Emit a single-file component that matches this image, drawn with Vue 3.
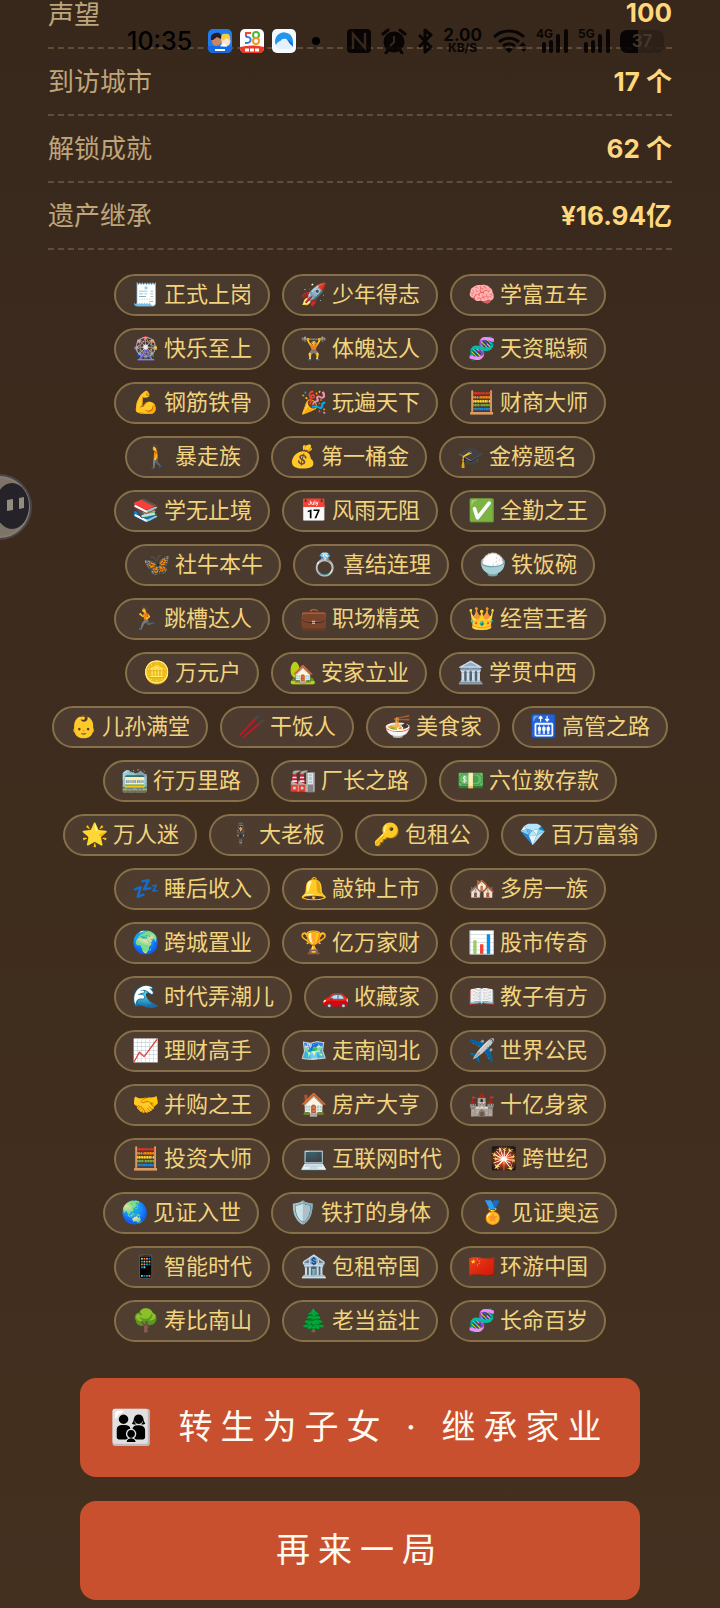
<script setup>
const stats = [
  { label: '声望', value: '100' },
  { label: '到访城市', value: '17 个' },
  { label: '解锁成就', value: '62 个' },
  { label: '遗产继承', value: '¥16.94亿' }
]

const badges = [
  { icon: '🧾', name: '正式上岗' },
  { icon: '🚀', name: '少年得志' },
  { icon: '🧠', name: '学富五车' },
  { icon: '🎡', name: '快乐至上' },
  { icon: '🏋️', name: '体魄达人' },
  { icon: '🧬', name: '天资聪颖' },
  { icon: '💪', name: '钢筋铁骨' },
  { icon: '🎉', name: '玩遍天下' },
  { icon: '🧮', name: '财商大师' },
  { icon: '🚶', name: '暴走族' },
  { icon: '💰', name: '第一桶金' },
  { icon: '🎓', name: '金榜题名' },
  { icon: '📚', name: '学无止境' },
  { icon: '📅', name: '风雨无阻' },
  { icon: '✅', name: '全勤之王' },
  { icon: '🦋', name: '社牛本牛' },
  { icon: '💍', name: '喜结连理' },
  { icon: '🍚', name: '铁饭碗' },
  { icon: '🏃', name: '跳槽达人' },
  { icon: '💼', name: '职场精英' },
  { icon: '👑', name: '经营王者' },
  { icon: '🪙', name: '万元户' },
  { icon: '🏡', name: '安家立业' },
  { icon: '🏛️', name: '学贯中西' },
  { icon: '👶', name: '儿孙满堂' },
  { icon: '🥢', name: '干饭人' },
  { icon: '🍜', name: '美食家' },
  { icon: '🛗', name: '高管之路' },
  { icon: '🚞', name: '行万里路' },
  { icon: '🏭', name: '厂长之路' },
  { icon: '💵', name: '六位数存款' },
  { icon: '🌟', name: '万人迷' },
  { icon: '🕴️', name: '大老板' },
  { icon: '🔑', name: '包租公' },
  { icon: '💎', name: '百万富翁' },
  { icon: '💤', name: '睡后收入' },
  { icon: '🔔', name: '敲钟上市' },
  { icon: '🏘️', name: '多房一族' },
  { icon: '🌍', name: '跨城置业' },
  { icon: '🏆', name: '亿万家财' },
  { icon: '📊', name: '股市传奇' },
  { icon: '🌊', name: '时代弄潮儿' },
  { icon: '🚗', name: '收藏家' },
  { icon: '📖', name: '教子有方' },
  { icon: '📈', name: '理财高手' },
  { icon: '🗺️', name: '走南闯北' },
  { icon: '✈️', name: '世界公民' },
  { icon: '🤝', name: '并购之王' },
  { icon: '🏠', name: '房产大亨' },
  { icon: '🏰', name: '十亿身家' },
  { icon: '🧮', name: '投资大师' },
  { icon: '💻', name: '互联网时代' },
  { icon: '🎇', name: '跨世纪' },
  { icon: '🌏', name: '见证入世' },
  { icon: '🛡️', name: '铁打的身体' },
  { icon: '🏅', name: '见证奥运' },
  { icon: '📱', name: '智能时代' },
  { icon: '🏦', name: '包租帝国' },
  { icon: '🇨🇳', name: '环游中国' },
  { icon: '🌳', name: '寿比南山' },
  { icon: '🌲', name: '老当益壮' },
  { icon: '🧬', name: '长命百岁' }
]

const signals = ['4G', '5G']
</script>

<template>
  <div class="page">
    <main class="summary">
      <dl class="stats">
        <div v-for="s in stats" :key="s.label" class="stat">
          <dt>{{ s.label }}</dt>
          <dd>{{ s.value }}</dd>
        </div>
      </dl>

      <ul class="badges">
        <li v-for="b in badges" :key="b.name" class="badge">
          <span class="badge-icon">{{ b.icon }}</span>
          <span>{{ b.name }}</span>
        </li>
      </ul>

      <div class="actions">
        <button type="button" class="action">👨‍👩‍👦 转生为子女 · 继承家业</button>
        <button type="button" class="action">再来一局</button>
      </div>
    </main>

    <!-- system status bar, drawn over the scrolled page -->
    <header class="status">
      <div class="status-group">
        <time class="clock">10:35</time>
        <div class="apps">
          <svg width="24" height="24" viewBox="0 0 24 24">
            <rect width="24" height="24" rx="5" fill="#1f7df0" />
            <path d="M13 10c2-3 8-3 9 0 1 3 0 6-3 7h-5z" fill="#fbe3cf" />
            <path d="M13 9c0-4 3-5 5-4 3-1 5 2 4 7l-3-3-3 2-3 1z" fill="#f7cf3e" />
            <path d="M4 11c0-2 2-3 5-3s5 2 4 6c-1 2-3 3-5 3-3 0-4-3-4-6z" fill="#c98564" />
            <path d="M3 11c-1-5 2-7 5-7 4-1 6 2 5 6l-4-2-4 3z" fill="#2a1c22" />
            <path d="M12 17l3-3 3 1 1 3-5 1z" fill="#fff" />
            <path d="M0 17c7-1 17 2 24 0v2c0 3-2 5-5 5H5c-3 0-5-2-5-5z" fill="#1669e0" />
            <path d="M7 21h10" stroke="#fff" stroke-width="2" />
          </svg>
          <svg width="24" height="24" viewBox="0 0 24 24">
            <rect width="24" height="24" rx="5" fill="#fff" />
            <path d="M0 18c8-2 16-2 24 0v1c0 3-2 5-5 5H5c-3 0-5-2-5-5z" fill="#e93b25" />
            <path d="M11 4H6v4" fill="none" stroke="#ef4a2b" stroke-width="2" />
            <path d="M6 8c6-1 6 6 1 6H5" fill="none" stroke="#2f7fe0" stroke-width="2" />
            <circle cx="16" cy="6" r="3" fill="none" stroke="#52b53c" stroke-width="2" />
            <circle cx="16" cy="12" r="3" fill="none" stroke="#f39a25" stroke-width="2" />
            <path d="M5 21h14" stroke="#fff" stroke-width="3" stroke-dasharray="4 1" />
          </svg>
          <svg width="24" height="24" viewBox="0 0 24 24">
            <rect width="24" height="24" rx="5" fill="#f7fafd" />
            <path d="M5 18A9 9 0 1 1 21 12v6l-4-4c0-4-6-6-8-2-3 0-4 3-4 6z" fill="#2196ee" />
            <path d="M17 14l-3-3c2-1 5 1 7 5v2z" fill="#1668d8" />
            <path d="M5 18c-2 0-1-5 3-5 1-4 8-4 9 1l4 4c-1 2-3 2-5 2H8c-2 0-3-1-3-2z" fill="#e4f1fc" />
          </svg>
        </div>
        <span class="dot"></span>
      </div>

      <div class="status-group status-right">
        <svg width="24" height="24" viewBox="0 0 24 24">
          <rect width="24" height="24" rx="4" />
          <path d="M6 20V5l12 14V4" fill="none" stroke="#38281c" stroke-width="2.4" />
        </svg>
        <svg width="26" height="26" viewBox="0 0 26 26">
          <circle cx="13" cy="14" r="10.5" />
          <path d="M2 6l5-4M24 6l-5-4M7 22l-2 3M19 22l2 3" stroke="#000" stroke-width="3" stroke-linecap="round" />
          <path d="M13 8v6l-4 4" fill="none" stroke="#38281c" stroke-width="2" />
        </svg>
        <svg width="16" height="26" viewBox="0 0 16 26">
          <path d="M2 7l12 12-6 5V2l6 5L2 19" fill="none" stroke="#000" stroke-width="3" stroke-linejoin="round" />
        </svg>
        <span class="speed"><b>2.00</b><small>KB/S</small></span>
        <svg width="34" height="26" viewBox="0 0 34 26">
          <path d="M2 9c8-8 22-8 30 0M7 14c6-5 14-5 20 0M11 18c3-3 9-3 12 0" fill="none" stroke="#000" stroke-width="3" />
          <path d="M13 21q4-3 8 0l-4 4zM27 18l4-4 3 4zM29 21h5l-2 3z" />
        </svg>
        <span v-for="s in signals" :key="s" class="signal">
          <small>{{ s }}</small>
          <svg width="28" height="24" viewBox="0 0 28 24">
            <path d="M4 22v-7M11 22V13M18 22V7M26 22V2" stroke="#000" stroke-width="4" stroke-linecap="round" />
          </svg>
        </span>
        <span class="battery">37</span>
      </div>
    </header>

    <!-- floating game assistant handle, half off the left edge -->
    <svg class="assistant" width="33" height="66" viewBox="0 0 33 66">
      <circle cx="-1" cy="33" r="32" fill="#857c6f" stroke="#4c4547" stroke-width="2" />
      <circle cx="-1" cy="33" r="29" fill="#7d7467" />
      <ellipse cx="12" cy="32" rx="17" ry="23" fill="#252229" />
      <path d="M7 26l6-1v11l-6 1zM19 24l5-1v11l-5 1z" fill="#958c7c" />
    </svg>
  </div>
</template>

<style>
body {
  margin: 0;
  background: #44301f;
}
</style>

<style scoped>
.page {
  position: relative;
  overflow: hidden;
  background: linear-gradient(#38281c, #44301f);
  font-family: Inter, "Noto Sans CJK SC", "Noto Color Emoji", sans-serif;
}

.summary {
  padding: 0 48px 8px;
}

/* the list is scrolled partly under the top edge */
.stats {
  margin: -18px 0 24px;
}

.stat {
  display: flex;
  align-items: center;
  justify-content: space-between;
  box-sizing: border-box;
  height: 67px;
  padding-bottom: 4px;
  border-bottom: 2px dashed #5f4d39;
}

.stat dt {
  font-size: 26px;
  color: #bea57b;
}

.stat dd {
  margin: 0;
  font-size: 26px;
  font-weight: 700;
  color: #ffd77c;
}

.badges {
  display: flex;
  flex-wrap: wrap;
  justify-content: center;
  gap: 12px;
  margin: 0;
  padding: 0;
  list-style: none;
}

.badge {
  display: flex;
  align-items: center;
  gap: 4px;
  padding: 2px 16px 4px;
  border: 2px solid #86704a;
  border-radius: 21px;
  background: rgba(255, 255, 255, 0.08);
  font-size: 22px;
  line-height: 32px;
  color: #f2d47e;
}

.badge-icon {
  display: flex;
  justify-content: center;
  width: 28px;
}

.actions {
  display: flex;
  flex-direction: column;
  gap: 24px;
  margin: 36px 32px 0;
}

.action {
  padding: 24px 0 26px;
  border: 0;
  border-radius: 16px;
  background: #c8502e;
  color: #fffaf0;
  font: inherit;
  font-size: 34px;
  line-height: 49px;
  letter-spacing: 8px;
  white-space: nowrap;
  cursor: pointer;
}

.status {
  position: absolute;
  top: 26px;
  left: 0;
  right: 0;
  display: flex;
  align-items: center;
  justify-content: space-between;
  height: 30px;
  padding: 0 56px 0 127px;
  color: #000;
  pointer-events: none;
}

.status-group,
.apps {
  display: flex;
  align-items: center;
}

.status-group {
  gap: 16px;
}

.apps {
  gap: 8px;
}

.status-right {
  gap: 10px;
  opacity: 0.85;
}

.clock {
  font-size: 25px;
  font-weight: 500;
}

.dot {
  width: 8px;
  height: 8px;
  border-radius: 50%;
  background: #000;
}

.speed {
  display: flex;
  flex-direction: column;
  align-items: center;
}

.speed b {
  font-size: 17px;
  font-weight: 700;
  line-height: 14px;
}

.speed small {
  font-size: 12px;
  font-weight: 700;
  line-height: 12px;
}

.signal {
  position: relative;
  display: flex;
  padding-left: 4px;
}

.signal small {
  position: absolute;
  top: 0;
  left: 0;
  font-size: 12px;
  font-weight: 700;
  line-height: 10px;
}

.battery {
  width: 44px;
  border-radius: 7px;
  background: linear-gradient(90deg, #000 40%, #2a2019 40%);
  color: #4a3b2d;
  font-size: 17px;
  font-weight: 600;
  line-height: 23px;
  text-align: center;
}

.assistant {
  position: absolute;
  top: 474px;
  left: 0;
}
</style>
